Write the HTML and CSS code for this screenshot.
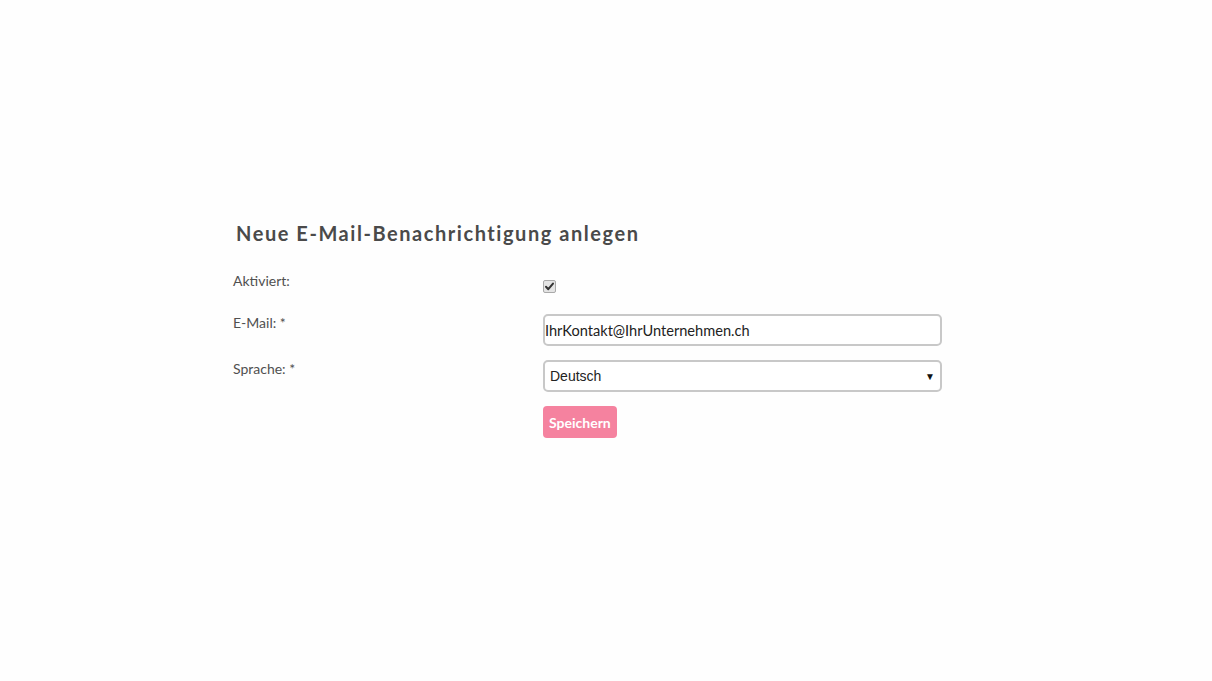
FILE: index.html
```html
<!DOCTYPE html>
<html lang="de">
<head>
<meta charset="utf-8">
<title>Neue E-Mail-Benachrichtigung anlegen</title>
<link rel="stylesheet" href="styles.css">
</head>
<body>
<main class="page">
  <h1 class="title">Neue E-Mail-Benachrichtigung anlegen</h1>
  <form class="form">
    <div class="row row-check">
      <label class="label" for="active">Aktiviert:</label>
      <div class="field">
        <span class="check" role="checkbox" aria-checked="true" id="active">
          <svg viewBox="0 0 13 13" width="13" height="13" aria-hidden="true"><path d="M3 6.8 L5.3 9.2 L10 3.6" fill="none" stroke="#333" stroke-width="2" stroke-linecap="round" stroke-linejoin="round"/></svg>
        </span>
      </div>
    </div>
    <div class="row">
      <label class="label" for="email">E-Mail: *</label>
      <div class="field"><input id="email" class="input" type="text" value="IhrKontakt@IhrUnternehmen.ch"></div>
    </div>
    <div class="row">
      <label class="label" for="lang">Sprache: *</label>
      <div class="field">
        <div class="select" id="lang">
          <span class="select-value">Deutsch</span>
          <span class="select-arrow">▼</span>
        </div>
      </div>
    </div>
    <div class="row">
      <span class="label"></span>
      <div class="field"><button type="button" class="btn">Speichern</button></div>
    </div>
  </form>
</main>
</body>
</html>
```
FILE: styles.css
```css
html, body {
  margin: 0;
  padding: 0;
  background: #fefefe;
}
body {
  font-family: Lato, "Liberation Sans", sans-serif;
  color: #444;
}
.page {
  padding: 220px 0 0 233px;
}
.title {
  margin: 0 0 0 3px;
  font-size: 20px;
  font-weight: 700;
  letter-spacing: 1.55px;
  color: #4a4a4a;
  line-height: 26px;
}
.form {
  margin-top: 30px;
  display: flex;
  flex-direction: column;
  gap: 14px;
}
.row {
  display: grid;
  grid-template-columns: 310px 399px;
  align-items: start;
}
.label {
  font-size: 14px;
  color: #505050;
  line-height: 18px;
}
.row-check .label { margin-top: -4px; }
.row-check { height: 24px; }
.check {
  display: block;
  box-sizing: border-box;
  margin-top: 4px;
  width: 13px;
  height: 13px;
  border: 1px solid #a9a9a9;
  border-radius: 2px;
  background: #e4e4e4;
}
.check svg {
  display: block;
  margin: -1px 0 0 -1px;
}
.input, .select {
  box-sizing: border-box;
  width: 399px;
  height: 32px;
  border: 2px solid #c8c8c8;
  border-radius: 5px;
  background: #fff;
  color: #222;
}
.input {
  padding: 0;
  font-family: Lato, "Liberation Sans", sans-serif;
  font-size: 14.6px;
  outline: none;
}
.select {
  display: flex;
  align-items: center;
  justify-content: space-between;
  padding: 0 5px 0 5px;
  font-family: "Liberation Sans", Arial, sans-serif;
  font-size: 14px;
}
.select-arrow {
  font-size: 10px;
  color: #111;
}
.btn {
  height: 32px;
  padding: 0 6px;
  border: none;
  border-radius: 4px;
  background: #f5829f;
  color: #fff;
  font-family: Lato, "Liberation Sans", sans-serif;
  font-weight: 700;
  font-size: 14px;
}
```
